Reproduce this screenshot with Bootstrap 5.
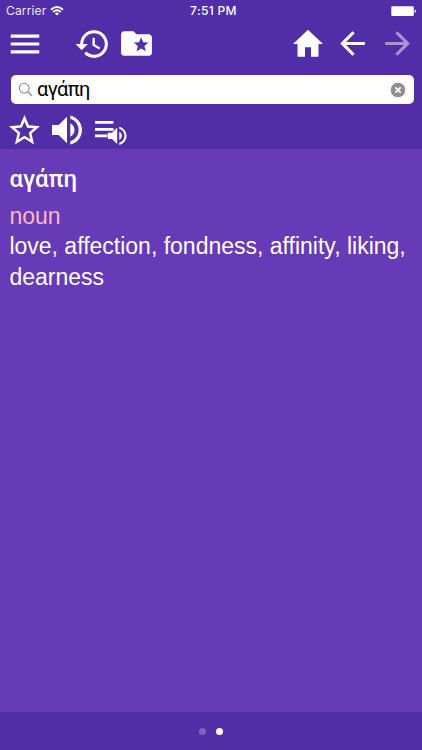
<!DOCTYPE html>
<html lang="en">
<head>
<meta charset="utf-8">
<meta name="viewport" content="width=device-width, initial-scale=1">
<title>Dictionary</title>
<link href="https://cdn.jsdelivr.net/npm/bootstrap@5.3.0/dist/css/bootstrap.min.css" rel="stylesheet">
<style>
body{height:750px;background:#673ab7;font-family:"Liberation Sans",Arial,sans-serif;overflow:hidden}
.app-head,.app-foot{background:#512da8}
.app-head{height:149px}
svg{display:block;fill:currentColor;flex:none}
.status{height:22px;padding:0 6px;font-family:Inter,sans-serif;font-size:12px;line-height:22px}
.status>div{flex:1 1 0}
.carrier{letter-spacing:.15px;opacity:.9}
.clock{font-weight:500;letter-spacing:.35px;padding-left:5px}
.tools{height:53px;padding:0 6.5px 10px 6px}
.tools .btn,.actions .btn{line-height:1}
.history{margin-left:30px}
.folder{margin-left:7px}
.back{margin-left:8.5px}
.next{margin-left:7.5px;opacity:.5}
.search{height:29px;margin:0 8.5px 0 11px;padding:0 7.5px 0 7px;border-radius:5px}
.query{font-family:Roboto,sans-serif;font-size:20px;line-height:27px;letter-spacing:-.6px;margin-left:4px;color:#000}
.actions{padding:6px 0 0 6px}
.entry{padding:15px 8px 14px 9.4px;font-size:23px;line-height:31px}
.entry h1{font-family:Roboto,sans-serif;font-weight:500;font-size:24px;line-height:31px;margin-bottom:6px}
.kind{color:#f9b9c4;line-height:30px}
.app-foot{height:38px;gap:9.5px}
.page-dot{width:7px;height:7px;background:#fff}
.dim{opacity:.25}
</style>
<script src="https://cdn.jsdelivr.net/npm/bootstrap@5.3.0/dist/js/bootstrap.bundle.min.js"></script>
</head>
<body class="d-flex flex-column text-white">
<header class="app-head flex-shrink-0">
  <div class="status d-flex align-items-center">
    <div class="d-flex align-items-center"><span class="carrier">Carrier</span>
      <svg class="ms-1" width="14" height="10" viewBox="0 0 14 10"><g fill="none" stroke="currentColor" stroke-width="1.9"><path d="M1 3.700Q7-1.700 13 3.700"/><path d="M3.200 6Q7 2.600 10.800 6"/></g><path d="M4.900 7.400Q7 5.700 9.100 7.400L7 9.600z"/></svg>
    </div>
    <div class="clock text-center text-nowrap">7:51 PM</div>
    <div class="d-flex justify-content-end"><svg width="25" height="11" viewBox="0 0 25 11"><rect x=".3" y=".3" width="22.500" height="9.700" rx="1.200"/><path d="M23.600 3.500q1.300.4 1.300 1.700t-1.300 1.700z"/></svg></div>
  </div>
  <nav class="tools d-flex align-items-center">
    <button class="btn p-0 border-0 text-white" aria-label="Menu"><svg width="38" height="38" viewBox="0 0 24 24"><path d="M3 18h18v-2H3v2zm0-5h18v-2H3v2zm0-7v2h18V6H3z"/></svg></button>
    <button class="btn p-0 border-0 text-white history" aria-label="History"><svg width="37" height="38" viewBox="0 0 24 24"><path d="M13 3c-4.970 0-9 4.030-9 9H1l3.890 3.890.07.14L9 12H6c0-3.870 3.130-7 7-7s7 3.130 7 7-3.130 7-7 7c-1.930 0-3.680-.79-4.940-2.060l-1.420 1.420C8.270 19.990 10.510 21 13 21c4.970 0 9-4.030 9-9s-4.030-9-9-9zm-1 5v5l4.280 2.540.72-1.210-3.500-2.080V8H12z"/></svg></button>
    <button class="btn p-0 border-0 text-white folder" aria-label="Favorites"><svg width="37" height="37" viewBox="0 0 24 24"><path fill-rule="evenodd" d="M20 6h-8l-2-2H4c-1.100 0-2 .9-2 2v12c0 1.100.9 2 2 2h16c1.100 0 2-.9 2-2V8c0-1.100-.9-2-2-2zM17.940 17L15 15.280 12.060 17l.78-3.330-2.590-2.240 3.410-.29L15 8l1.340 3.140 3.410.29-2.590 2.240z"/></svg></button>
    <button class="btn p-0 border-0 text-white ms-auto" aria-label="Home"><svg width="36" height="38" viewBox="0 0 24 24" preserveAspectRatio="none"><path d="M10 20v-6h4v6h5v-8h3L12 3 2 12h3v8z"/></svg></button>
    <button class="btn p-0 border-0 text-white back" aria-label="Back"><svg width="37" height="37" viewBox="0 0 24 24"><path d="M20 11H7.830l5.590-5.590L12 4l-8 8 8 8 1.410-1.410L7.830 13H20v-2z"/></svg></button>
    <button class="btn p-0 border-0 text-white next" aria-label="Forward"><svg width="37" height="37" viewBox="0 0 24 24"><path d="M12 4l-1.410 1.410L16.170 11H4v2h12.170l-5.580 5.590L12 20l8-8z"/></svg></button>
  </nav>
  <div class="search bg-white d-flex align-items-center">
    <svg width="15" height="15" viewBox="0 0 15 15"><g fill="none" stroke="#8e8e93" stroke-width="1.100"><circle cx="6.200" cy="6.200" r="4.900"/><path d="M9.800 9.800l4.200 4.200" stroke-width="1.400"/></g></svg>
    <span class="query">αγάπη</span>
    <svg class="ms-auto" width="16" height="16" viewBox="0 0 16 16"><circle cx="8" cy="8" r="7.300" fill="#8e8e93"/><path d="M5.300 5.300l5.400 5.400M10.700 5.300l-5.400 5.400" stroke="#fff" stroke-width="1.700"/></svg>
  </div>
  <div class="actions d-flex align-items-center">
    <button class="btn p-0 border-0 text-white" aria-label="Add to favorites"><svg width="37" height="37" viewBox="0 0 24 24"><path d="M22 9.240l-7.190-.62L12 2 9.190 8.630 2 9.240l5.460 4.730L5.820 21 12 17.270 18.180 21l-1.630-7.030L22 9.240zM12 15.400l-3.760 2.270 1-4.280-3.320-2.880 4.380-.38L12 6.100l1.710 4.040 4.380.38-3.320 2.880 1 4.280L12 15.400z"/></svg></button>
    <button class="btn p-0 border-0 text-white ms-1" aria-label="Pronounce"><svg width="40" height="40" viewBox="0 0 24 24"><path d="M3 9v6h4l5 5V4L7 9H3zm13.500 3c0-1.770-1.020-3.290-2.500-4.030v8.050c1.480-.73 2.500-2.250 2.500-4.020zM14 3.230v2.060c2.890.86 5 3.540 5 6.710s-2.110 5.850-5 6.710v2.060c4.010-.91 7-4.490 7-8.770s-2.990-7.860-7-8.770z"/></svg></button>
    <button class="btn p-0 border-0 text-white ms-2" aria-label="Read entry"><svg width="34" height="34" viewBox="0 0 34 34"><path d="M0 8h18.500v2.700H0zM0 15h18.500v2.700H0zM0 21.500h12.500v2.700H0z"/><path transform="translate(9.700 10.300) scale(1.040)" d="M3 9v6h4l5 5V4L7 9H3zm13.500 3c0-1.770-1.020-3.290-2.500-4.030v8.050c1.480-.73 2.500-2.250 2.500-4.020zM14 3.230v2.060c2.890.86 5 3.540 5 6.710s-2.110 5.850-5 6.710v2.060c4.010-.91 7-4.490 7-8.770s-2.990-7.860-7-8.770z"/></svg></button>
  </div>
</header>
<main class="entry flex-grow-1">
  <h1>αγάπη</h1>
  <div class="kind">noun</div>
  <div>love, affection, fondness, affinity, liking, dearness</div>
</main>
<footer class="app-foot flex-shrink-0 d-flex align-items-center justify-content-center">
  <span class="page-dot rounded-circle dim"></span><span class="page-dot rounded-circle"></span>
</footer>
</body>
</html>
